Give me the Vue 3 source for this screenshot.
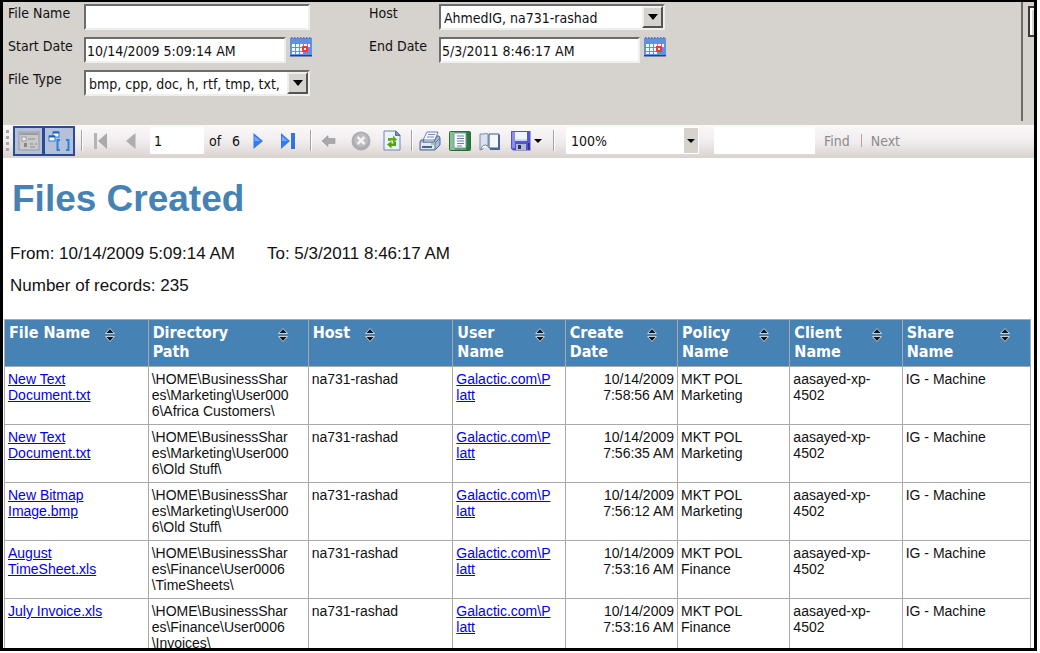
<script setup>
import { ref } from 'vue'

const fileName = ref('')
const startDate = ref('10/14/2009 5:09:14 AM')
const endDate = ref('5/3/2011 8:46:17 AM')
const pageNumber = ref('1')
const findText = ref('')

const columns = [
  { key: 'file', label: 'File Name', fit: 'fit-file' },
  { key: 'path', label: 'Directory\nPath' },
  { key: 'host', label: 'Host', fit: 'fit-host' },
  { key: 'user', label: 'User\nName' },
  { key: 'date', label: 'Create\nDate' },
  { key: 'policy', label: 'Policy\nName' },
  { key: 'client', label: 'Client\nName' },
  { key: 'share', label: 'Share\nName' }
]

const common = {
  host: 'na731-rashad',
  user: 'Galactic.com\\P\nlatt',
  client: 'aasayed-xp-\n4502',
  share: 'IG - Machine'
}

const rows = [
  { file: 'New Text\nDocument.txt', path: '\\HOME\\BusinessShar\nes\\Marketing\\User000\n6\\Africa Customers\\', date: '10/14/2009\n7:58:56 AM', policy: 'MKT POL\nMarketing' },
  { file: 'New Text\nDocument.txt', path: '\\HOME\\BusinessShar\nes\\Marketing\\User000\n6\\Old Stuff\\', date: '10/14/2009\n7:56:35 AM', policy: 'MKT POL\nMarketing' },
  { file: 'New Bitmap\nImage.bmp', path: '\\HOME\\BusinessShar\nes\\Marketing\\User000\n6\\Old Stuff\\', date: '10/14/2009\n7:56:12 AM', policy: 'MKT POL\nMarketing' },
  { file: 'August\nTimeSheet.xls', path: '\\HOME\\BusinessShar\nes\\Finance\\User0006\n\\TimeSheets\\', date: '10/14/2009\n7:53:16 AM', policy: 'MKT POL\nFinance' },
  { file: 'July Invoice.xls', path: '\\HOME\\BusinessShar\nes\\Finance\\User0006\n\\Invoices\\', date: '10/14/2009\n7:53:16 AM', policy: 'MKT POL\nFinance' }
].map((row) => ({ ...common, ...row }))
</script>

<template>
  <div class="page">
    <main class="viewer">
      <form class="params" @submit.prevent>
        <div class="fields">
          <label for="file-name">File Name</label>
          <input id="file-name" v-model="fileName" class="box" type="text" />
          <label for="host">Host</label>
          <span class="drop">
            <select id="host" class="box"><option>AhmedIG, na731-rashad</option></select>
            <span class="drop-btn"><svg width="10" height="6" viewBox="0 0 10 6"><path d="M0 0h10L5 6z" /></svg></span>
          </span>

          <label for="start-date">Start Date</label>
          <span class="date">
            <input id="start-date" v-model="startDate" class="box" type="text" />
            <button type="button" class="cal" aria-label="Pick start date">
              <svg width="22" height="20" viewBox="0 0 22 20">
                <rect y="1" width="22" height="18" fill="#5f8fe6" /><path d="M0 18h22v1.500H0z" fill="#174494" />
                <path d="M1 1h1.500M4 1h1.500M7 1h1.500M10 1h1.500M13 1h1.500M16 1h1.500M19 1h1.500" stroke="#5b78b0" stroke-width="2" />
                <path d="M2 7h3v3H2zM6 7h3v3H6zM10 7h3v3h-3zM14 7h3v3h-3zM18 7h2v3h-2zM2 11h3v3H2zM6 11h3v3H6zM10 11h3v3h-3zM2 15h3v2H2zM6 15h3v2H6zM10 15h3v2h-3z" fill="#f4f8ff" />
                <rect x="13" y="10" width="4" height="4" fill="#fff" stroke="#f33" stroke-width="2" />
              </svg>
            </button>
          </span>
          <label for="end-date">End Date</label>
          <span class="date">
            <input id="end-date" v-model="endDate" class="box" type="text" />
            <button type="button" class="cal" aria-label="Pick end date">
              <svg width="22" height="20" viewBox="0 0 22 20">
                <rect y="1" width="22" height="18" fill="#5f8fe6" /><path d="M0 18h22v1.500H0z" fill="#174494" />
                <path d="M1 1h1.500M4 1h1.500M7 1h1.500M10 1h1.500M13 1h1.500M16 1h1.500M19 1h1.500" stroke="#5b78b0" stroke-width="2" />
                <path d="M2 7h3v3H2zM6 7h3v3H6zM10 7h3v3h-3zM14 7h3v3h-3zM18 7h2v3h-2zM2 11h3v3H2zM6 11h3v3H6zM10 11h3v3h-3zM2 15h3v2H2zM6 15h3v2H6zM10 15h3v2h-3z" fill="#f4f8ff" />
                <rect x="13" y="10" width="4" height="4" fill="#fff" stroke="#f33" stroke-width="2" />
              </svg>
            </button>
          </span>

          <label for="file-type">File Type</label>
          <span class="drop">
            <select id="file-type" class="box"><option>bmp, cpp, doc, h, rtf, tmp, txt,</option></select>
            <span class="drop-btn"><svg width="10" height="6" viewBox="0 0 10 6"><path d="M0 0h10L5 6z" /></svg></span>
          </span>
        </div>
        <div class="run"><button type="submit" aria-label="View Report"></button></div>
      </form>

      <div class="toolbar" role="toolbar">
        <span class="grip"><i></i><i></i><i></i><i></i></span>
        <span class="toggles">
          <button type="button" aria-label="Document map">
            <svg width="22" height="22" viewBox="0 0 22 22">
              <rect x="1" y="2" width="20" height="18" fill="#c9c9cc" stroke="#96989f" /><path d="M2 4h18" stroke="#9a9ca4" stroke-width="2" />
              <rect x="4" y="7" width="4" height="4" fill="#f3f3f3" stroke="#999" /><path d="M10 9h7M12 14h3M12 17h5" stroke="#8b8b8b" />
              <rect x="6" y="13" width="3" height="4" fill="#888" /><path d="M17 14h2" stroke="#888" />
            </svg>
          </button>
          <button type="button" aria-label="Parameters">
            <svg width="24" height="24" viewBox="0 0 24 24">
              <rect x="6" y="3" width="6" height="5" fill="#fff" stroke="#2c7ad6" /><path d="M6 3.500h6" stroke="#1b5fc0" stroke-width="2" />
              <rect x="2" y="7" width="6" height="5" fill="#fff" stroke="#2c7ad6" /><path d="M2 7.500h6" stroke="#1b5fc0" stroke-width="2" />
              <path d="M13 11h-2.500v10H13M19 11h2.500v10H19" fill="none" stroke="#2585dd" stroke-width="2" />
            </svg>
          </button>
        </span>
        <span class="sep"></span>
        <button type="button" class="tool first" aria-label="First page">
          <svg width="16" height="18" viewBox="0 0 16 18"><path d="M1 1h3v16H1z" fill="#b4b4b6" /><path d="M14 1v16L5 9z" fill="#aaaaad" /></svg>
        </button>
        <button type="button" class="tool prev" aria-label="Previous page">
          <svg width="10" height="16" viewBox="0 0 10 16"><path d="M9.500 0v16L0 8z" fill="#aeaeb1" /></svg>
        </button>
        <input v-model="pageNumber" class="page-no" type="text" aria-label="Page" />
        <span class="of">of</span><span class="total">6</span>
        <button type="button" class="tool next" aria-label="Next page">
          <svg width="10" height="16" viewBox="0 0 10 16"><path d="M.5 0v16L10 8z" fill="#3379ef" /><path d="M1.500 3v5h6z" fill="#76aaff" /></svg>
        </button>
        <button type="button" class="tool last" aria-label="Last page">
          <svg width="14" height="18" viewBox="0 0 14 18"><path d="M0 1v16l9-8z" fill="#3379ef" /><path d="M1 4v5h6z" fill="#76aaff" /><path d="M10 1h4v16h-4z" fill="#3276dc" /></svg>
        </button>
        <span class="sep"></span>
        <button type="button" class="tool back" aria-label="Back">
          <svg width="14" height="12" viewBox="0 0 14 12"><path d="M0 6l6-5.500v3h7v5H6v3z" fill="#a9a9ab" stroke="#969698" stroke-width=".6" /></svg>
        </button>
        <button type="button" class="tool stop" aria-label="Stop">
          <svg width="20" height="20" viewBox="0 0 20 20"><circle cx="10" cy="10" r="9.500" fill="#adadaf" /><circle cx="10" cy="9" r="7" fill="#bcbcbe" /><path d="M6.500 6l7 7m0-7l-7 7" stroke="#f2f2f2" stroke-width="2.500" /></svg>
        </button>
        <button type="button" class="tool refresh" aria-label="Refresh">
          <svg width="18" height="21" viewBox="0 0 18 21">
            <path d="M1 1h12l4 4v15H1z" fill="#eaf3fd" stroke="#6c85ad" /><path d="M12.500 1v4.500H17z" fill="#7793c0" stroke="#556f9c" />
            <path d="M5 11V8h5V5.500l4 4L10 13v-2.500H7.500V11z" fill="#62ab12" /><path d="M13 11.500V16H8.500v2.500L4 14.500 8.500 11v2.500h2v-2z" fill="#58a10c" />
          </svg>
        </button>
        <span class="sep"></span>
        <button type="button" class="tool print" aria-label="Print">
          <svg width="22" height="20" viewBox="0 0 22 20">
            <path d="M8 1h11l-3 8H4z" fill="#f4f9ff" stroke="#6b83a8" /><path d="M9 3.500h7M8 6h7" stroke="#7090bf" />
            <path d="M2 9h3l-1 2h11l3-6h2l1 2v7l-5 5H1v-8z" fill="#a9bddb" stroke="#536b92" /><path d="M2 12h14v6H2z" fill="#dfe9f7" /><path d="M3 16h10" stroke="#4c6188" stroke-width="2" /><path d="M16 12l5-5M16 12v6" stroke="#5f769f" /><path d="M12 13h3" stroke="#62a83c" />
          </svg>
        </button>
        <button type="button" class="tool layout" aria-label="Print layout">
          <svg width="22" height="20" viewBox="0 0 22 20">
            <rect x=".5" y=".5" width="21" height="19" rx="1" fill="#55a45b" stroke="#286c34" /><path d="M1 1h5v18H1z" fill="#85c486" /><path d="M17 1h4v18h-4z" fill="#2c7a3a" />
            <path d="M5 2h12v15H5z" fill="#f8fbff" stroke="#7790ba" /><path d="M8 5h7M8 7.500h7M8 10h7M8 12.500h7M8 15h5" stroke="#6880a8" />
          </svg>
        </button>
        <button type="button" class="tool setup" aria-label="Page setup">
          <svg width="22" height="20" viewBox="0 0 22 20">
            <path d="M1 3h3q3-1 5 0v12q-4-1-5 3l-3 1z" fill="#d9e2ee" stroke="#7b8da9" /><path d="M2 18q2-6 7-3" fill="#fff" stroke="#6f809c" />
            <path d="M10 3h10v14H10z" fill="#f4f8fd" stroke="#40588a" /><path d="M20 4v14H11" fill="none" stroke="#4a6497" stroke-width="2" />
          </svg>
        </button>
        <button type="button" class="tool save" aria-label="Export">
          <svg width="20" height="20" viewBox="0 0 20 20">
            <path d="M0 0h19.500v19.500H2L0 17.500z" fill="#5353cf" /><path d="M1 1h3v16H1z" fill="#8b8bf0" /><path d="M4 1h12v9H4z" fill="#f0f4ff" /><path d="M4 8h12v2H4z" fill="#c9d6f4" />
            <path d="M5 13h10v6H5z" fill="#aebbd0" /><path d="M7 14h3v4H7z" fill="#30324f" /><path d="M17 12h2v7h-2z" fill="#34349d" />
          </svg>
          <svg width="8" height="4" viewBox="0 0 8 4"><path d="M0 0h8L4 4z" /></svg>
        </button>
        <span class="sep"></span>
        <span class="zoom">
          <select aria-label="Zoom"><option>100%</option></select>
          <span class="zoom-btn"><svg width="8" height="4" viewBox="0 0 8 4"><path d="M0 0h8L4 4z" /></svg></span>
        </span>
        <input v-model="findText" class="find-box" type="text" aria-label="Find text" />
        <button type="button" class="find">Find</button>
        <span class="bar"></span>
        <button type="button" class="find">Next</button>
      </div>

      <section class="report">
        <h1>Files Created</h1>
        <p class="range"><span>From: 10/14/2009 5:09:14 AM</span><span>To: 5/3/2011 8:46:17 AM</span></p>
        <p>Number of records: 235</p>
        <table>
          <colgroup><col v-for="c in columns" :key="c.key" :class="'c-' + c.key" /></colgroup>
          <thead>
            <tr>
              <th v-for="c in columns" :key="c.key" scope="col">
                <div class="head" :class="c.fit">
                  <span>{{ c.label }}</span>
                  <button type="button" aria-label="Sort">
                    <svg width="12" height="16" viewBox="0 0 12 16"><path d="M1.500 6.500L6 1.500l4.500 5zM1.500 9.500h9L6 14.500z" fill="#151515" stroke="#c3d0dc" stroke-width="1" /></svg>
                  </button>
                </div>
              </th>
            </tr>
          </thead>
          <tbody>
            <tr v-for="(row, i) in rows" :key="i">
              <td v-for="c in columns" :key="c.key" :class="{ right: c.key === 'date' }">
                <a v-if="c.key === 'file' || c.key === 'user'" href="#">{{ row[c.key] }}</a>
                <template v-else>{{ row[c.key] }}</template>
              </td>
            </tr>
          </tbody>
        </table>
      </section>
    </main>
  </div>
</template>

<style>
html,
body {
  height: 100%;
  background: #fff;
}
</style>

<style scoped>
.page {
  height: 100vh;
  box-sizing: border-box;
  padding: 0 3px 2px 0;
}
.viewer {
  height: 100%;
  box-sizing: border-box;
  overflow: hidden;
  border: 3px solid #000;
  border-top-width: 2px;
  font-family: "DejaVu Sans Condensed", "Noto Sans", sans-serif;
  font-size: 14px;
  color: #111;
}
button,
input,
select {
  box-sizing: border-box;
  font: inherit;
  color: inherit;
  border-radius: 0;
}
button {
  padding: 0;
  border: 0;
  background: none;
}
svg {
  display: block;
}

.params {
  display: flex;
  justify-content: space-between;
  height: 123px;
  background: #d6d3ce;
}
.fields {
  display: grid;
  grid-template-columns: 76px 285px 70px 227px;
  grid-auto-rows: 26px;
  row-gap: 7px;
  padding: 2px 0 0 5px;
}
.fields label {
  line-height: 18px;
}
.box {
  width: 226px;
  height: 26px;
  padding: 2px 0 0 1px;
  border: 2px solid;
  border-color: #6c6c6c #efefed #efefed #6c6c6c;
  background: #fff;
  appearance: none;
}
.drop {
  position: relative;
  width: 226px;
  height: 26px;
}
.drop .box {
  padding-left: 3px;
  padding-right: 20px;
}
.drop-btn {
  position: absolute;
  top: 2px;
  right: 2px;
  display: grid;
  place-items: center;
  width: 21px;
  height: 22px;
  box-sizing: border-box;
  border: 2px solid;
  border-color: #f1efec #55534f #55534f #f1efec;
  background: #d6d3ce;
  pointer-events: none;
}
.date {
  display: flex;
  gap: 4px;
}
.date .box {
  width: 202px;
}
.cal {
  align-self: flex-start;
}
.run {
  width: 13px;
  height: 119px;
  box-sizing: border-box;
  padding: 4px 0 0 5px;
  border-left: 2px solid #6d6b68;
  overflow: hidden;
}
.run button {
  width: 90px;
  height: 31px;
  border: 2px solid #3b3b3b;
  box-shadow: inset 2px 2px #fff;
}

.toolbar {
  display: flex;
  align-items: center;
  height: 33px;
  box-sizing: border-box;
  padding: 0 0 2px 3px;
  background: linear-gradient(#fbf8f9, #f1edee 50%, #d9d3cf);
}
.grip {
  display: grid;
  gap: 3px;
  width: 7px;
}
.grip i {
  width: 3px;
  height: 3px;
  background: #aaa6a5;
}
.toggles {
  display: flex;
}
.toggles button {
  display: grid;
  place-items: center;
  width: 31px;
  height: 30px;
  border: 2px solid #2b4a95;
  background: #b6c0d9;
}
.toggles button + button {
  border-left-width: 1px;
}
.sep {
  flex: none;
  width: 2px;
  height: 21px;
  box-sizing: border-box;
  margin: 0 10px 0 6px;
  border-left: 1px solid #a4a2a6;
  border-right: 1px solid #fff;
}
.tool {
  flex: none;
}
.prev {
  margin-left: 17px;
}
.page-no {
  width: 54px;
  height: 27px;
  margin-left: 14px;
  padding: 0 4px;
  border: 0;
  background: #fff;
}
.of {
  width: 23px;
  margin-left: 5px;
}
.total {
  width: 21px;
}
.last {
  margin-left: 18px;
}
.last + .sep {
  margin-left: 15px;
}
.stop {
  margin-left: 15px;
}
.refresh {
  margin-left: 12px;
}
.refresh + .sep {
  margin: 0 6px 0 10px;
}
.layout,
.setup {
  margin-left: 8px;
}
.save {
  display: flex;
  align-items: center;
  gap: 3px;
  margin-left: 10px;
}
.save + .sep {
  margin: 0 11px;
}
.zoom {
  position: relative;
  width: 133px;
  height: 27px;
}
.zoom select {
  width: 100%;
  height: 100%;
  padding: 0 5px;
  border: 0;
  background: #fff;
  appearance: none;
}
.zoom-btn {
  position: absolute;
  top: 1px;
  right: 1px;
  display: grid;
  place-items: center;
  width: 14px;
  height: 25px;
  background: #d6d3ce;
  pointer-events: none;
}
.find-box {
  width: 101px;
  height: 27px;
  margin: 0 9px 0 15px;
  border: 0;
  background: #fff;
}
.find {
  color: #8d8a8a;
}
.bar {
  width: 1px;
  height: 13px;
  margin: 0 9px 0 11px;
  background: #aaa6a8;
}

.report {
  font-family: "Liberation Sans", Arial, sans-serif;
}
h1 {
  margin: 0;
  padding: 20px 0 0 9px;
  font-size: 37px;
  line-height: 42px;
  color: #4682b4;
}
p {
  margin: 0;
  padding-left: 7px;
  font-size: 17px;
  line-height: 32px;
}
.range {
  display: flex;
  gap: 32px;
  padding-top: 18px;
}
table {
  width: calc(100% - 4px);
  margin: 17px 0 0 1px;
  border-collapse: collapse;
  table-layout: fixed;
  font-size: 14px;
  line-height: 16px;
}
.c-file { width: 14%; }
.c-path { width: 15.6%; }
.c-host { width: 14.1%; }
.c-user,
.c-date,
.c-policy,
.c-client { width: 10.95%; }
.c-share { width: 12.5%; }
th,
td {
  box-sizing: border-box;
  border: 1px solid #a9a9a9;
  vertical-align: top;
  text-align: left;
  white-space: pre;
  overflow: hidden;
}
th {
  height: 47px;
  padding: 3px 19px 0 4px;
  background: #4682b4;
  color: #fff;
  font: bold 16px/19px "DejaVu Sans Condensed", "Noto Sans", sans-serif;
}
td {
  height: 58px;
  padding: 4px 3px 0;
}
td.right {
  text-align: right;
}
.head {
  display: flex;
  align-items: flex-start;
}
.head span {
  flex: 1;
}
.head button {
  padding-top: 4px;
}
.fit-file span {
  flex: 0 0 95px;
}
.fit-host span {
  flex: 0 0 51px;
}
a {
  color: #0000e8;
}
</style>
